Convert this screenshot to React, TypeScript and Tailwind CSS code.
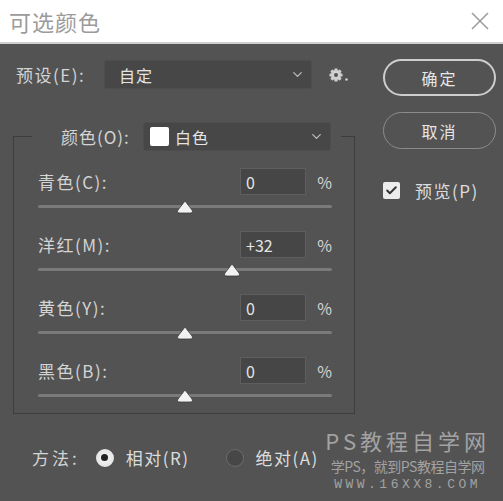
import React from 'react';
import { ChevronDown, Check } from 'lucide-react';

const FONT = { fontFamily: '"Noto Sans CJK SC", "Noto Sans", sans-serif' };

const SLIDERS = [
  { label: '青色(C):', value: 0 },
  { label: '洋红(M):', value: 32 },
  { label: '黄色(Y):', value: 0 },
  { label: '黑色(B):', value: 0 },
];

function Gear() {
  return (
    <svg width="20" height="16" viewBox="0 0 20 16">
      <g transform="translate(7 8)" fill="#d0d0d0">
        {[0, 45, 90, 135].map((a) => (
          <rect key={a} x="-1.6" y="-6.5" width="3.2" height="13" rx="0.6" transform={`rotate(${a})`} />
        ))}
        <circle r="4.8" />
        <circle r="2" fill="#535353" />
      </g>
      <circle cx="17.5" cy="12.5" r="1.3" fill="#d0d0d0" />
    </svg>
  );
}

function SliderRow({ label, value }: { label: string; value: number }) {
  const pct = (value + 100) / 200;
  return (
    <div>
      <div className="flex items-center h-[27px]">
        <span className="text-[17px] text-[#d4d4d4] tracking-[1.5px] flex-1">{label}</span>
        <div className="w-[66px] h-[27px] bg-[#464646] border border-[#5e5e5e] flex items-center pl-[5px] text-[16px] text-[#e4e4e4]">
          {value > 0 ? `+${value}` : value}
        </div>
        <span className="w-[26px] text-right text-[16px] text-[#d4d4d4]">%</span>
      </div>
      <div className="relative h-[36px]">
        <div className="absolute left-0 right-0 top-[10px] h-[3px] bg-[#7a7a7a] rounded-full" />
        <div className="absolute top-[5px] -translate-x-1/2" style={{ left: `${pct * 100}%` }}>
          <svg width="18" height="14" viewBox="0 0 18 14">
            <path d="M9 1 L16 10 Q17.5 13 14 13 L4 13 Q0.5 13 2 10 Z" fill="#f2f2f2" stroke="#3c3c3c" strokeWidth="0.8" />
          </svg>
        </div>
      </div>
    </div>
  );
}

export default function App() {
  return (
    <div className="w-[503px] h-[501px] overflow-hidden flex flex-col" style={FONT}>
      {/* Title bar */}
      <div className="h-[44px] shrink-0 bg-white border-b-2 border-[#cfcfcf] flex items-center justify-between pl-[9px] pr-[13px]">
        <span className="text-[22px] text-[#9b9b9b] tracking-[1px]">可选颜色</span>
        <svg width="20" height="20" viewBox="0 0 20 20">
          <path d="M2 2 L18 18 M18 2 L2 18" stroke="#9a9a9a" strokeWidth="1.5" />
        </svg>
      </div>

      {/* Body */}
      <div className="flex-1 bg-[#535353] flex flex-col">
        <div className="flex">
          <div className="w-[370px] pl-[13px] pt-[16px]">
            {/* Preset */}
            <div className="flex items-center h-[29px]">
              <span className="ml-[3px] w-[88px] text-[17px] tracking-[1.5px] text-[#d4d4d4]">预设(E):</span>
              <div className="w-[208px] h-[29px] bg-[#474747] border border-[#4d4d4d] rounded-[3px] flex items-center justify-between pl-[14px] pr-[6px]">
                <span className="text-[16px] tracking-[1px] text-[#e4e4e4]">自定</span>
                <ChevronDown size={15} color="#bdbdbd" strokeWidth={2} />
              </div>
              <div className="ml-[17px] mt-[1px]">
                <Gear />
              </div>
            </div>

            {/* Color group */}
            <fieldset className="mt-[33px] w-[342px] min-w-0 h-[292px] border border-[#3d3d3d] p-0">
              <legend className="ml-[18px] pl-[29px] pr-[10px]">
                <div className="flex items-center h-[29px]">
                  <span className="w-[82px] text-[17px] tracking-[1px] text-[#d4d4d4]">颜色(O):</span>
                  <div className="w-[188px] h-[29px] bg-[#474747] border border-[#4d4d4d] rounded-[3px] flex items-center justify-between pl-[6px] pr-[6px]">
                    <div className="flex items-center gap-[6px]">
                      <span className="w-[19px] h-[19px] bg-white rounded-[2px]" />
                      <span className="text-[16px] tracking-[1px] text-[#e4e4e4]">白色</span>
                    </div>
                    <ChevronDown size={15} color="#bdbdbd" strokeWidth={2} />
                  </div>
                </div>
              </legend>
              <div className="pl-[24px] pr-[22px] pt-[17px]">
                {SLIDERS.map((s) => (
                  <SliderRow key={s.label} label={s.label} value={s.value} />
                ))}
              </div>
            </fieldset>
          </div>

          {/* Right column */}
          <div className="pl-[13px] pt-[15px] flex flex-col">
            <button className="w-[113px] h-[37px] rounded-full border-2 border-[#cdcdcd] text-[16px] text-[#e6e6e6] tracking-[2px]">
              确定
            </button>
            <button className="mt-[16px] w-[113px] h-[37px] rounded-full border-[1.5px] border-[#8c8c8c] text-[16px] text-[#e6e6e6] tracking-[2px]">
              取消
            </button>
            <div className="mt-[29px] flex items-center">
              <span className="w-[17px] h-[17px] bg-[#ececec] rounded-[2px] flex items-center justify-center">
                <Check size={13} color="#333" strokeWidth={3.5} />
              </span>
              <span className="ml-[15px] text-[17px] tracking-[1.5px] text-[#dcdcdc]">预览(P)</span>
            </div>
          </div>
        </div>

        {/* Method row */}
        <div className="flex-1 flex items-center pl-[32px] pr-[13px]">
          <span className="text-[17px] tracking-[3px] text-[#d4d4d4]">方法:</span>
          <span className="ml-[16px] w-[18px] h-[18px] rounded-full bg-[#eeeeee] border-[3px] border-[#e8e8e8] flex items-center justify-center">
            <span className="w-[7px] h-[7px] rounded-full bg-[#222]" />
          </span>
          <span className="ml-[12px] text-[17px] tracking-[1.5px] text-[#dcdcdc]">相对(R)</span>
          <span className="ml-[36px] w-[18px] h-[18px] rounded-full bg-[#474747] border-[1.5px] border-[#6c6c6c]" />
          <span className="ml-[12px] text-[17px] tracking-[1.5px] text-[#dcdcdc]">绝对(A)</span>
          <div className="ml-auto flex flex-col items-center mt-[2px]">
            <span className="text-[22px] leading-[32px] text-[#a2a2a2] tracking-[4px]">PS教程自学网</span>
            <span className="text-[14px] leading-[21px] text-[#a2a2a2] tracking-[-0.5px]" style={{ fontFamily: '"Noto Sans CJK SC", serif' }}>
              学PS，就到PS教程自学网
            </span>
            <span className="text-[13px] leading-[16px] text-[#a2a2a2] tracking-[3.5px]" style={{ fontFamily: '"Liberation Mono", monospace' }}>
              WWW.16XX8.COM
            </span>
          </div>
        </div>
      </div>
    </div>
  );
}
